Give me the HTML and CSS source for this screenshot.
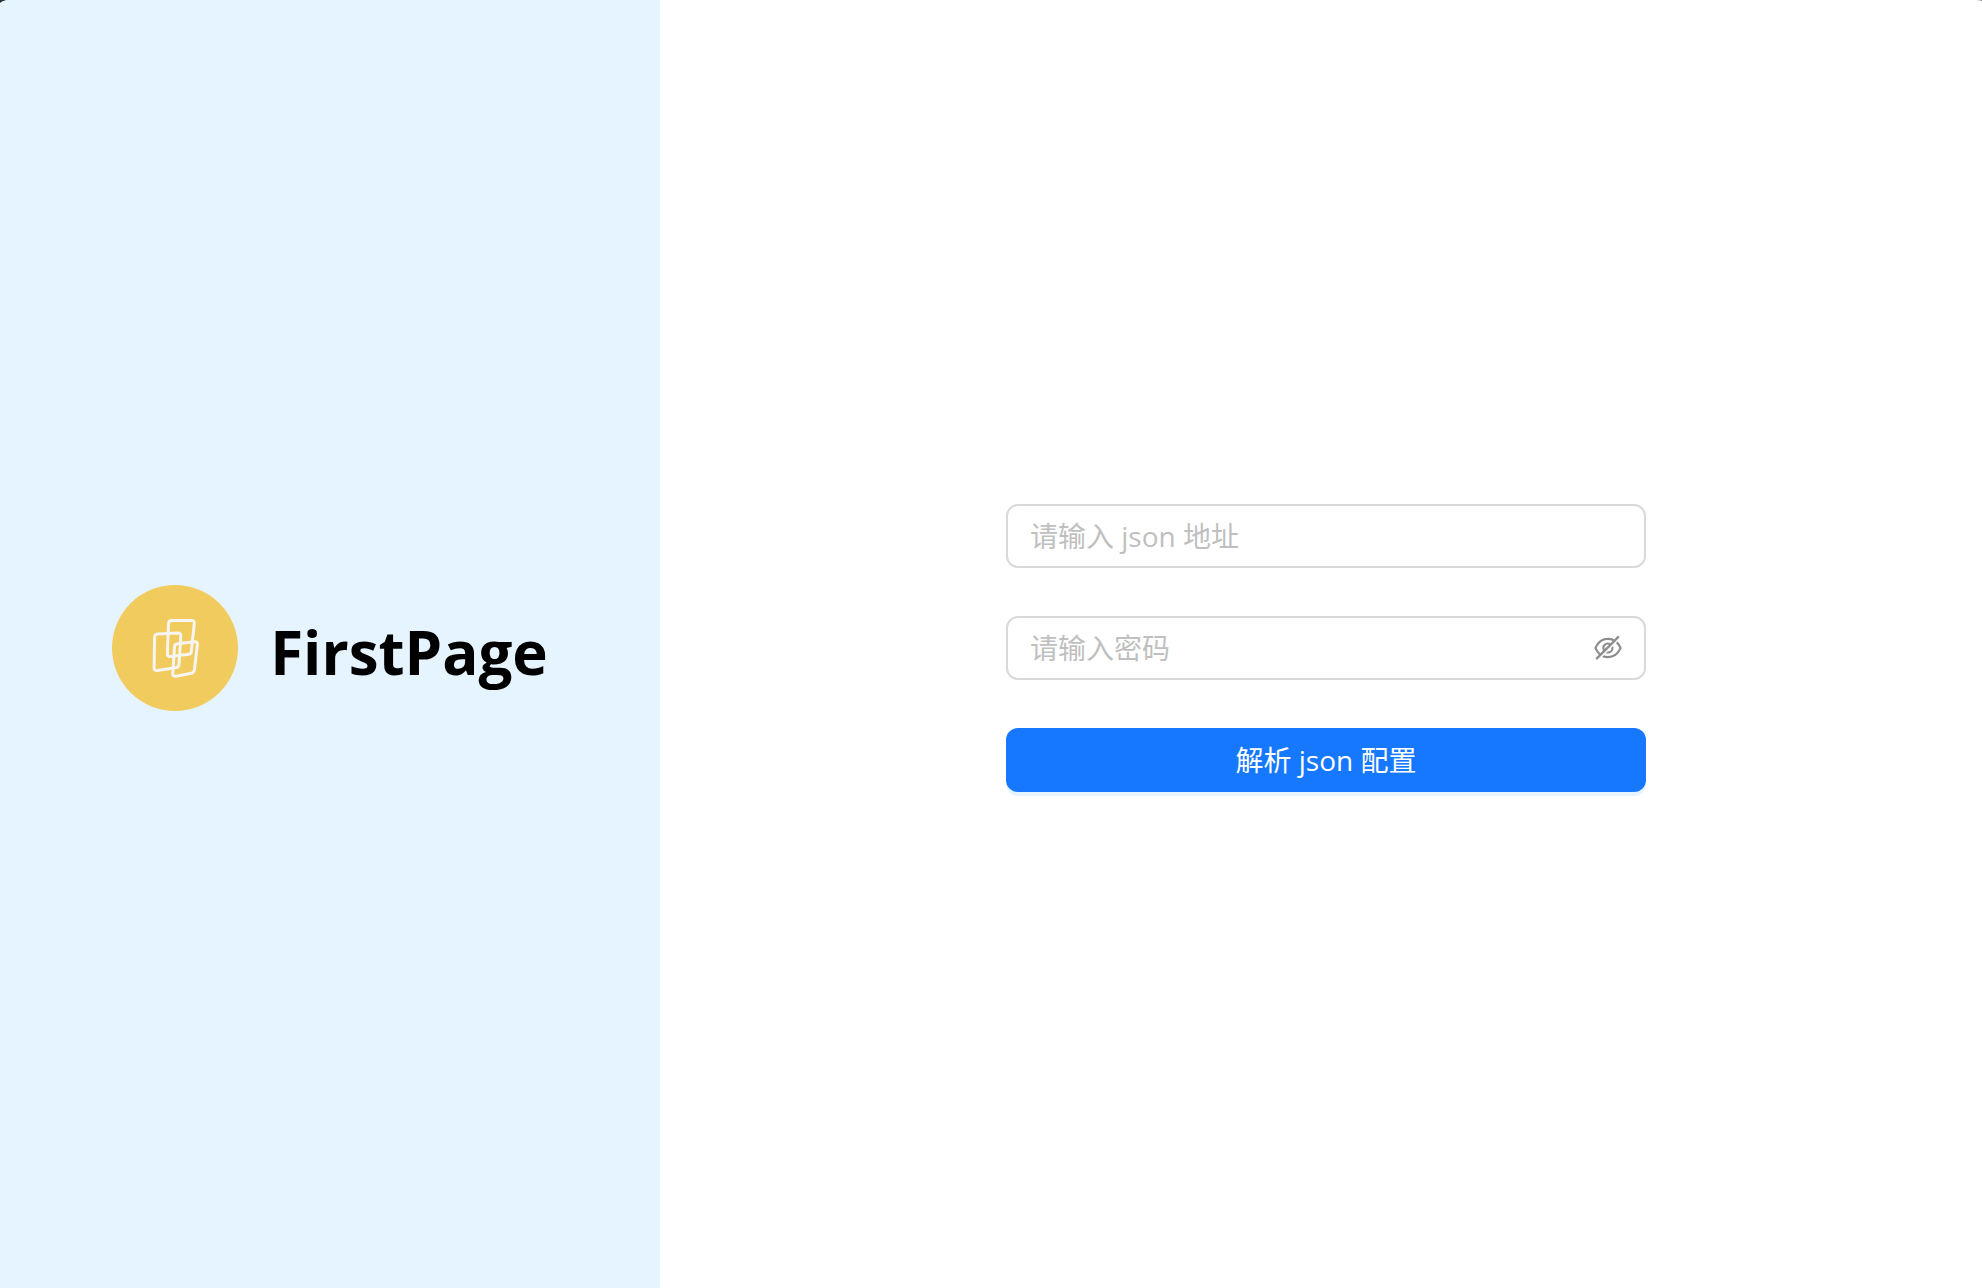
FILE: index.html
```html
<!DOCTYPE html>
<html lang="zh-CN">
<head>
<meta charset="utf-8">
<meta name="viewport" content="width=device-width, initial-scale=1">
<title>FirstPage</title>
<link rel="stylesheet" href="styles.css">
</head>
<body>
<div class="page">
  <header class="brand">
    <svg class="logo" viewBox="0 0 126 126" aria-hidden="true">
      <circle cx="63" cy="63" r="63" fill="#f1cb5e"/>
      <g fill="none" stroke="#f6f5f2" stroke-width="3" stroke-linejoin="round">
        <path d="M59.500 35.500H79.500Q82.500 35.500 82.300 38.500L79.300 66.500Q79 69 76.500 69.300L58.500 71.500Q55.200 71.800 55.400 68.500L56.500 38.500Q56.700 35.500 59.500 35.500Z"/>
        <path d="M45.500 49L66 48Q69 48 68.800 51L67 79.500Q66.700 82 64.500 82.500L45.500 85.500Q42 86 42.100 82.500L42.600 52Q42.700 49.200 45.500 49Z"/>
        <path d="M65.500 58.700L82.500 56.800Q85.700 56.500 85.400 59.500L82.400 85Q82 87.500 79.500 88.200L64 91.200Q60.600 91.800 60.800 88.500L62.500 61.500Q62.800 59 65.500 58.700Z"/>
      </g>
    </svg>
    <h1 class="title">FirstPage</h1>
  </header>
  <main class="content">
    <form class="form">
      <input class="field" type="text" aria-label="json 地址" placeholder="请输入 json 地址">
      <div class="field password">
        <input class="password-input" type="password" aria-label="密码" placeholder="请输入密码">
        <button class="toggle" type="button" aria-label="显示密码">
          <svg class="eye" viewBox="64 64 896 896" fill="currentColor" aria-hidden="true">
            <path d="M942.2 486.2Q889.47 375.11 816.7 305l-50.88 50.88C807.31 395.53 843.45 447.4 874.7 512 791.5 684.2 673.4 766 512 766q-72.67 0-133.87-22.38L323 798.75Q408 838 512 838q288.3 0 430.2-300.3a60.29 60.29 0 000-51.5zm-63.57-320.64L836 122.88a8 8 0 00-11.32 0L715.31 232.2Q624.86 186 512 186q-288.3 0-430.2 300.3a60.3 60.3 0 000 51.5q56.69 119.4 136.5 191.41L112.48 835a8 8 0 000 11.31L155.17 889a8 8 0 0011.31 0l712.15-712.12a8 8 0 000-11.32zM149.3 512C232.6 339.8 350.7 258 512 258c54.54 0 104.13 9.36 149.12 28.39l-70.3 70.3a176 176 0 00-238.13 238.13l-83.42 83.42C223.1 637.49 183.3 582.28 149.3 512zm246.7 0a112.11 112.11 0 01146.2-106.69L401.31 546.2A112 112 0 01396 512z"/>
            <path d="M508 624c-3.46 0-6.87-.16-10.25-.47l-52.82 52.82a176.09 176.09 0 00227.42-227.42l-52.82 52.82c.31 3.38.47 6.79.47 10.25a111.94 111.94 0 01-112 112z"/>
          </svg>
        </button>
      </div>
      <button class="submit" type="submit">解析 json 配置</button>
    </form>
  </main>
</div>
</body>
</html>
```

FILE: styles.css
```css
*,
*::before,
*::after {
  box-sizing: border-box;
}

body {
  margin: 0;
  background: #303030;
  font-family: "Open Sans", "Noto Sans CJK SC", sans-serif;
}

input,
button {
  font: inherit;
}

.page {
  display: grid;
  grid-template-columns: 33.3% 1fr;
  min-height: 100vh;
  overflow: hidden;
  border-radius: 10px 6px 0 0 / 4px 1px 0 0;
  background: #fff;
}

.brand {
  display: flex;
  align-items: center;
  justify-content: center;
  gap: 32px;
  padding-top: 8px;
  background: #e6f4ff;
}

.logo {
  width: 126px;
  height: 126px;
}

.title {
  margin: 0;
  padding-top: 8px;
  color: #000;
  font-size: 60px;
  font-weight: 700;
  line-height: 84px;
}

.content {
  display: flex;
  align-items: center;
  justify-content: center;
  padding: 8px 0 0 10px;
}

.form {
  display: flex;
  flex-direction: column;
  gap: 48px;
  width: 640px;
  font-size: 28px;
  line-height: 44px;
}

.field {
  width: 100%;
  height: 64px;
  padding: 0 22px;
  border: 2px solid #d9d9d9;
  border-radius: 12px;
  outline: 0;
  background: #fff;
  color: #1f1f1f;
}

.field:focus,
.field:focus-within {
  border-color: #1677ff;
}

.password {
  display: flex;
  align-items: center;
  gap: 8px;
}

.password-input {
  flex: 1;
  min-width: 0;
  padding: 0;
  border: 0;
  outline: 0;
  background: transparent;
  color: inherit;
}

::placeholder {
  color: #bfbfbf;
  opacity: 1;
}

.toggle {
  display: flex;
  padding: 0;
  border: 0;
  background: transparent;
  color: #8c8c8c;
  cursor: pointer;
}

.eye {
  width: 28px;
  height: 28px;
}

.submit {
  height: 64px;
  padding: 0 30px;
  border: 0;
  border-radius: 12px;
  background: #1677ff;
  box-shadow: 0 4px 0 #e6f4ff;
  color: #fff;
  cursor: pointer;
}
```
